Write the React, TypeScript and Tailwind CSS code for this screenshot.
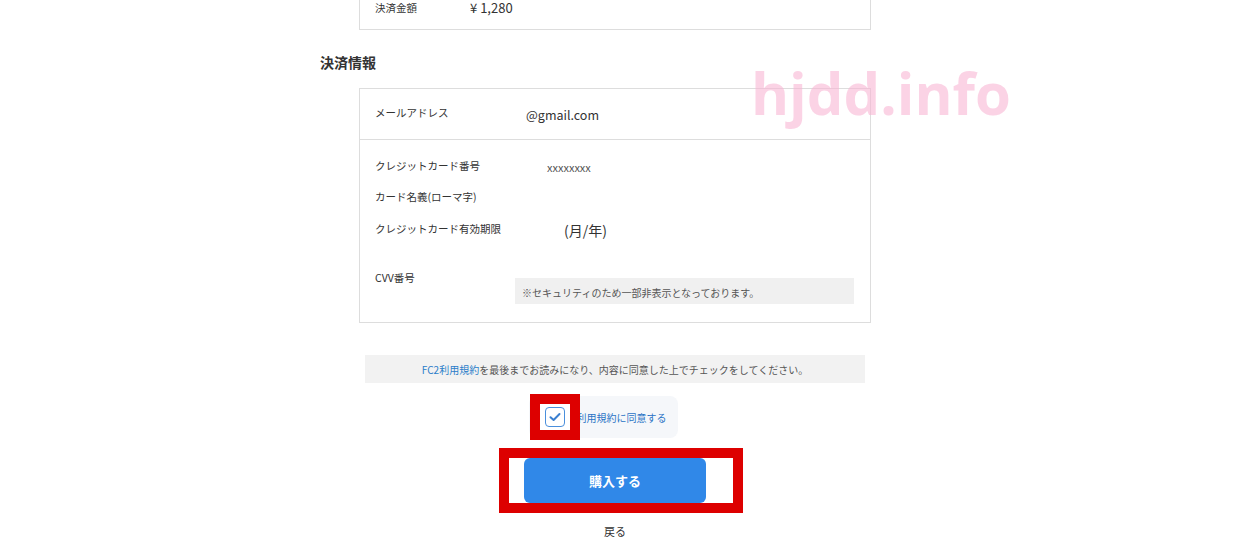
export default function App() {
  return (
    <div className="relative h-[546px] w-[1246px] overflow-hidden bg-white font-['Noto_Sans_CJK_JP',sans-serif] text-[#333]">
      <div className="ml-[320px] flex w-[590px] flex-col">
        {/* 上部: 決済金額 */}
        <div className="mx-[39px] -mt-[12px] border border-[#ddd] px-[15px] pt-[12px] pb-[14px]">
          <div className="flex items-center text-[10.5px] leading-[14px]">
            <span className="w-[95px]">決済金額</span>
            <span className="text-[13px] leading-[14px]">¥ 1,280</span>
          </div>
        </div>

        <h2 className="mt-[22px] text-[14px] font-bold leading-[20px]">決済情報</h2>

        <div className="mx-[39px] mt-[16px] border border-[#ddd]">
          <div className="flex h-[51px] items-center border-b border-[#ddd] px-[15px] pt-[2px]">
            <span className="-mt-[4px] w-[151px] text-[10.5px]">メールアドレス</span>
            <span className="text-[12.5px]">@gmail.com</span>
          </div>

          <div className="px-[15px] pt-[18px] pb-[18px]">
            <div className="flex h-[16px] items-center text-[10.5px]">
              <span className="w-[172px]">クレジットカード番号</span>
              <span className="pt-[3px] text-[11px] text-[#555]">xxxxxxxx</span>
            </div>
            <div className="mt-[15px] flex h-[16px] items-center text-[10.5px]">
              <span>カード名義(ローマ字)</span>
            </div>
            <div className="mt-[16px] flex h-[16px] items-center text-[10.5px]">
              <span className="w-[189px]">クレジットカード有効期限</span>
              <span className="pt-[2px] text-[14px]">(月/年)</span>
            </div>
            <div className="mt-[33px] flex items-start text-[10.5px]">
              <span className="w-[140px] leading-[16px]">CVV番号</span>
              <div className="mt-[8px] mr-[1px] flex h-[26px] flex-1 items-center bg-[#f0f0f0] px-[7px] pt-[3px] text-[10px] text-[#555]">
                ※セキュリティのため一部非表示となっております。
              </div>
            </div>
          </div>
        </div>

        {/* 規約 */}
        <div className="mx-[45px] mt-[32px] flex h-[28px] items-center justify-center bg-[#f2f2f2] text-[10px] text-[#555]">
          <span>
            <span className="text-[#2a7dc9]">FC2利用規約</span>
            を最後までお読みになり、内容に同意した上でチェックをしてください。
          </span>
        </div>

        <div className="mt-[11px] flex justify-center">
          <div className="relative ml-[-24px] flex h-[46px] items-center">
            <div className="flex h-[42px] w-[149px] items-center rounded-[8px] bg-[#f5f7fa] pl-[48px] text-[10px] text-[#2a73c5]">
              利用規約に同意する
            </div>
            <div className="absolute left-[1px] top-0 flex h-[46px] w-[50px] items-center justify-center border-[10px] border-[#dd0000] bg-white">
              <div className="flex h-[20px] w-[20px] items-center justify-center rounded-[4px] border-[1.5px] border-[#4a8fdc]">
                <svg width="12" height="10" viewBox="0 0 12 10" fill="none">
                  <path d="M1.5 5.2 L4.6 8 L10.5 2" stroke="#3a7fd0" strokeWidth="2" strokeLinecap="round" strokeLinejoin="round" />
                </svg>
              </div>
            </div>
          </div>
        </div>

        <div className="mt-[8px] flex justify-center">
          <div className="ml-[12px] flex h-[65px] w-[244px] items-center border-[10px] border-[#dd0000] bg-white pl-[15px]">
            <button className="h-[45px] w-[182px] rounded-[6px] bg-[#3088e8] text-[13px] font-bold text-white">
              購入する
            </button>
          </div>
        </div>

        <div className="mt-[10px] text-center text-[11px] leading-[16px]">戻る</div>
      </div>

      <div className="pointer-events-none absolute left-[751px] top-[53px] font-['Open_Sans',sans-serif] text-[58px] font-bold leading-[80px] text-[#f9b5d3]/60">
        hjdd.info
      </div>
    </div>
  );
}
